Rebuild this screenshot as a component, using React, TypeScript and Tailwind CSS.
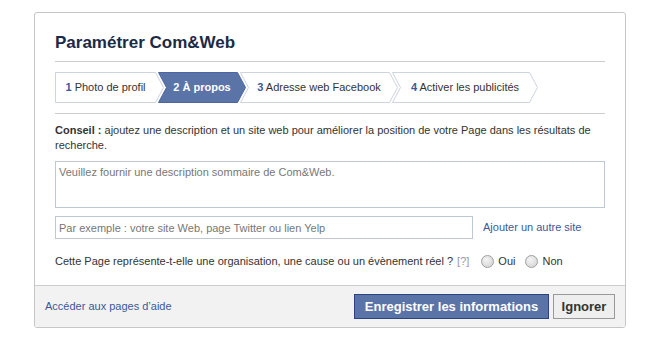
import React from "react";

const tabs = [
  { n: "1", label: "Photo de profil", w: 109, first: true, active: false },
  { n: "2", label: "À propos", w: 88, first: false, active: true },
  { n: "3", label: "Adresse web Facebook", w: 158, first: false, active: false },
  { n: "4", label: "Activer les publicités", w: 146, first: false, active: false },
];

function Tab({ n, label, w, first, active }: { n: string; label: string; w: number; first: boolean; active: boolean }) {
  const h = 31;
  const d = 8;
  const pts = first
    ? `0.5,0.5 ${w - d - 0.5},0.5 ${w - 0.5},${h / 2} ${w - d - 0.5},${h - 0.5} 0.5,${h - 0.5}`
    : `0.5,0.5 ${w - d - 0.5},0.5 ${w - 0.5},${h / 2} ${w - d - 0.5},${h - 0.5} 0.5,${h - 0.5} ${d + 0.5},${h / 2}`;
  return (
    <div
      className={`relative flex h-[31px] shrink-0 items-center justify-center ${first ? "pr-[8px]" : "-ml-[6px] px-[8px]"} ${active ? "z-10" : ""}`}
      style={{ width: w }}
    >
      <svg className="absolute inset-0" width={w} height={h}>
        <polygon
          points={pts}
          fill={active ? "#5b74a8" : "#ffffff"}
          stroke={active ? "#4d66a0" : "#cdd3df"}
          strokeWidth="1"
        />
      </svg>
      <span className={`relative whitespace-nowrap ${active ? "font-bold text-white" : "text-[#333333]"}`}>
        <span className={`font-bold ${active ? "text-white" : "text-[#3b5998]"}`}>{n}</span> {label}
      </span>
    </div>
  );
}

function Radio({ label }: { label: string }) {
  return (
    <label className="flex items-center gap-[4px]">
      <span className="h-[13px] w-[13px] rounded-full border border-[#a0a0a0] bg-[radial-gradient(circle_at_40%_35%,#f4f4f4,#cfcfcf)]" />
      <span>{label}</span>
    </label>
  );
}

export default function App() {
  return (
    <div className="min-h-[339px] w-[647px] bg-white pt-[12px] pl-[34px] font-['Liberation_Sans',Arial,sans-serif] text-[11px] text-[#333333]">
      <div className="w-[592px] overflow-hidden rounded-[3px] border border-[#c6c6c6] bg-white">
        <div className="px-[20px]">
          <div className="flex h-[49px] items-end border-b border-[#cccccc] pb-[8px]">
            <h1 className="text-[17px] font-bold leading-[20px] text-[#1c2a47]">Paramétrer Com&amp;Web</h1>
          </div>
          <div className="flex pt-[10px] pb-[10px] border-b border-[#cccccc]">
            {tabs.map((t) => (
              <Tab key={t.n} {...t} />
            ))}
          </div>
          <p className="pt-[9px] leading-[15px]">
            <b>Conseil :</b> ajoutez une description et un site web pour améliorer la position de votre Page dans les résultats de recherche.
          </p>
          <textarea
            className="mt-[8px] block h-[47px] w-full resize-none border border-[#bdc7d8] px-[3px] py-[3px] text-[11px] leading-[14px] outline-none placeholder:text-[#777777]"
            placeholder="Veuillez fournir une description sommaire de Com&Web."
          />
          <div className="mt-[8px] flex items-center">
            <input
              className="block h-[23px] w-[418px] border border-[#bdc7d8] px-[3px] text-[11px] outline-none placeholder:text-[#777777]"
              placeholder="Par exemple : votre site Web, page Twitter ou lien Yelp"
            />
            <a className="ml-[10px] text-[#3b5998]">Ajouter un autre site</a>
          </div>
          <div className="mt-[14px] flex h-[16px] items-center pb-0">
            <span>Cette Page représente-t-elle une organisation, une cause ou un évènement réel ?</span>
            <span className="ml-[4px] text-[#999999]">[?]</span>
            <div className="ml-[12px] flex items-center gap-[10px]">
              <Radio label="Oui" />
              <Radio label="Non" />
            </div>
          </div>
          <div className="h-[16px]" />
        </div>
        <div className="flex h-[42px] items-center justify-between border-t border-[#cccccc] bg-[#f2f2f2] pl-[10px] pr-[10px]">
          <a className="text-[#3b5998]">Accéder aux pages d’aide</a>
          <div className="flex items-center gap-[4px]">
            <button className="h-[25px] w-[195px] border border-[#29447e] bg-[#5b74a8] text-[13px] font-bold text-white">
              Enregistrer les informations
            </button>
            <button className="h-[25px] w-[62px] border border-[#999999] bg-[#eeeeee] text-[13px] font-bold text-[#333333]">
              Ignorer
            </button>
          </div>
        </div>
      </div>
    </div>
  );
}
